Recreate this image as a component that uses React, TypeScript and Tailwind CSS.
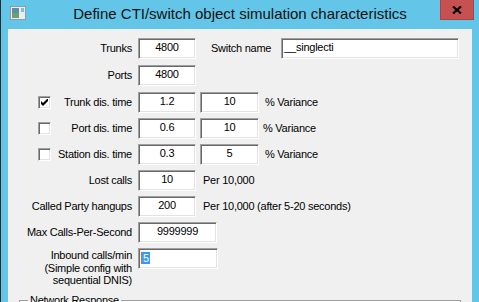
import React from "react";

const FIELD =
  "flex items-center border border-t-[#a0a0a0] border-l-[#a0a0a0] border-b-white border-r-white bg-white shadow-[inset_1px_1px_0_#696969,inset_-1px_-1px_0_#e3e3e3] h-[21px] pb-[2px]";

function Box({ value, w = "w-[58px]", left = false }: { value: string; w?: string; left?: boolean }) {
  return <div className={`${FIELD} ${w} ${left ? "justify-start pl-[2px]" : "justify-center"}`}>{value}</div>;
}

function Check({ on }: { on?: boolean }) {
  return (
    <div className="ml-[30px] flex h-[13px] w-[13px] shrink-0 items-center justify-center border border-t-[#a0a0a0] border-l-[#a0a0a0] border-b-white border-r-white bg-white shadow-[inset_1px_1px_0_#696969,inset_-1px_-1px_0_#e3e3e3]">
      {on && (
        <svg width="7" height="7" viewBox="0 0 7 7">
          <path d="M0 2v3l2 2 5-5V-1L2 4z" fill="#000" />
        </svg>
      )}
    </div>
  );
}

function Row({
  label,
  check,
  checked,
  children,
  className = "",
}: {
  label: React.ReactNode;
  check?: boolean;
  checked?: boolean;
  children?: React.ReactNode;
  className?: string;
}) {
  return (
    <div className={`flex items-center ${className}`}>
      <div className="flex w-[124px] shrink-0 items-center">
        {check && <Check on={checked} />}
        <div className="flex-1 text-right leading-[13px]">{label}</div>
      </div>
      <div className="ml-[6px] flex items-center">{children}</div>
    </div>
  );
}

export default function App() {
  return (
    <div className="relative flex h-[302px] w-[479px] flex-col overflow-hidden border-l border-[#2b2b2b] bg-[#63c6e8]">
      <div className="grid h-[29px] shrink-0 grid-cols-[1fr_auto_1fr] items-start">
        <div className="pl-[9px] pt-[6px]">
          <svg width="16" height="14" viewBox="0 0 16 14">
            <rect x="0.5" y="0.5" width="15" height="13" fill="#e8eef2" stroke="#8f9ba6" />
            <rect x="2" y="2" width="7" height="10" fill="#5b8fa8" />
            <rect x="2" y="7" width="7" height="5" fill="#6aa36a" />
            <rect x="11" y="2" width="3" height="4" fill="#7cc0d8" />
          </svg>
        </div>
        <div className="pt-[4px] font-['Liberation_Sans'] text-[15px] leading-[20px] text-[#111]">
          Define CTI/switch object simulation characteristics
        </div>
        <div className="flex justify-end pr-[5px]">
          <div className="flex h-[20px] w-[34px] items-center justify-center border border-t-0 border-[#a84444] bg-[#c75050]">
            <svg width="10" height="8" viewBox="0 0 10 8">
              <path d="M1 0.5l8 7M9 0.5l-8 7" stroke="#000" strokeWidth="2.2" />
            </svg>
          </div>
        </div>
      </div>

      <div className="ml-[7px] flex w-[464px] flex-1 flex-col bg-[#f0f0f0] pt-[8px] font-['Liberation_Sans'] text-[11px] tracking-[-0.25px] text-black">
        <Row label="Trunks" className="h-[22px]">
          <Box value="4800" />
          <span className="ml-[15px]">Switch name</span>
          <div className="ml-[10px]">
            <Box value="__singlecti" w="w-[178px]" left />
          </div>
        </Row>
        <Row label="Ports" className="mt-[6px] h-[21px]">
          <Box value="4800" />
        </Row>
        <Row label="Trunk dis. time" check checked className="mt-[6px] h-[21px]">
          <Box value="1.2" />
          <div className="ml-[4px]">
            <Box value="10" w="w-[59px]" />
          </div>
          <span className="ml-[6px]">% Variance</span>
        </Row>
        <Row label="Port dis. time" check className="mt-[5px] h-[21px]">
          <Box value="0.6" />
          <div className="ml-[4px]">
            <Box value="10" w="w-[59px]" />
          </div>
          <span className="ml-[4px]">% Variance</span>
        </Row>
        <Row label="Station dis. time" check className="mt-[5px] h-[21px]">
          <Box value="0.3" />
          <div className="ml-[4px]">
            <Box value="5" w="w-[59px]" />
          </div>
          <span className="ml-[6px]">% Variance</span>
        </Row>
        <Row label="Lost calls" className="mt-[5px] h-[21px]">
          <Box value="10" />
          <span className="ml-[7px]">Per 10,000</span>
        </Row>
        <Row label="Called Party hangups" className="mt-[5px] h-[21px]">
          <Box value="200" />
          <span className="ml-[7px]">Per 10,000 (after 5-20 seconds)</span>
        </Row>
        <Row label="Max Calls-Per-Second" className="mt-[5px] h-[21px]">
          <Box value="9999999" w="w-[79px]" />
        </Row>
        <div className="mt-[5px] flex items-start">
          <div className="w-[124px] shrink-0 pt-[1px] text-right leading-[12.5px]">
            Inbound calls/min
            <br />
            (Simple config with
            <br />
            sequential DNIS)
          </div>
          <div className="ml-[6px]">
            <div className={`${FIELD} w-[80px] justify-start pl-[2px]`}>
              <span className="border-l border-[#e07020] bg-[#3399ff] px-[1px] leading-[12px] text-white">5</span>
            </div>
          </div>
        </div>
        <fieldset className="ml-[11px] mt-[7px] h-[40px] w-[442px] border border-[#a0a0a0] shadow-[inset_1px_1px_0_#fff]">
          <legend className="ml-[8px] px-[2px] leading-[13px]">Network Response</legend>
        </fieldset>
      </div>
    </div>
  );
}
